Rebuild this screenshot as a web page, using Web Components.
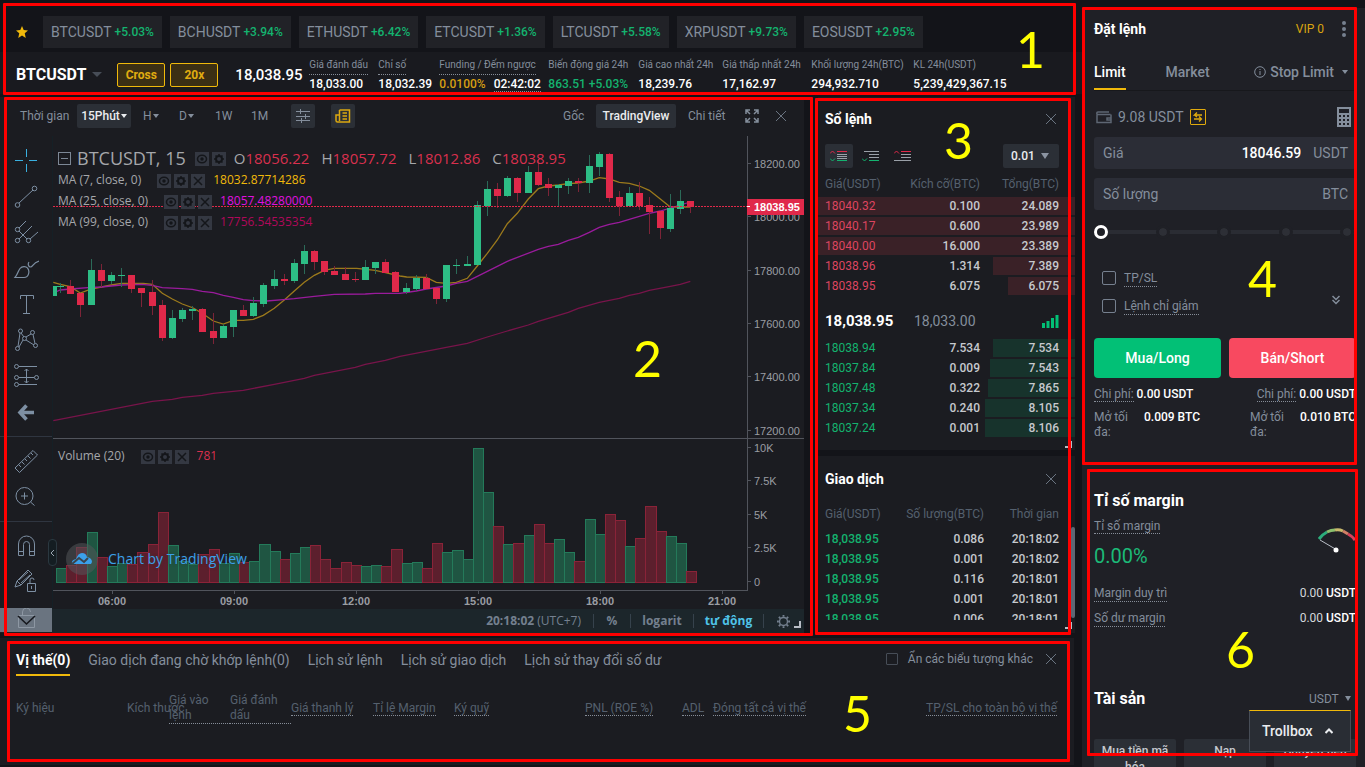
<!DOCTYPE html>
<html lang="vi">
<head>
<meta charset="utf-8">
<meta name="viewport" content="width=device-width, initial-scale=1">
<title>BTCUSDT Futures</title>
<style>
:root{
  --ui:Roboto,"Noto Sans",sans-serif;
  --chart:"Open Sans","Noto Sans",sans-serif;
  --axis:"Liberation Sans",Arial,sans-serif;
  --bg:#131419; --panel:#1b1c21; --side:#1f2026; --field:#2b2d36; --chip:#212227; --btn:#2b2f36;
  --text:#848e9c; --dim:#55606e; --bright:#fff; --num:#c6c9ce; --green:#14b36f; --red:#d9304e; --gold:#f0b90b;
}
html,body{margin:0;height:100%}
body{background:var(--bg);font:12px/16px var(--ui);color:var(--text);overflow:hidden}
</style>
</head>
<body>
<trade-app></trade-app>
<script>
const BASE=`*{box-sizing:border-box}
button,input,select{font:inherit;color:inherit;background:none;border:0;margin:0;padding:0}
button{cursor:pointer}
a{color:inherit;text-decoration:none}
h2{margin:0;color:var(--bright);font-weight:700}
table{border-collapse:collapse;border-spacing:0}
th,td{padding:0;font-weight:400;text-align:left}
svg{display:block;fill:none;stroke:currentColor}
[hidden]{display:none}
.u{border-bottom:1px dotted #868d98}
`;
const define=(name,html,setup)=>customElements.define(name,class extends HTMLElement{
  constructor(){
    super();
    const t=document.createElement('template');
    t.innerHTML=html.replace('<style>','<style>'+BASE);
    this.attachShadow({mode:'open'}).append(t.content.cloneNode(true));
  }
  connectedCallback(){ if(setup) setup(this,this.shadowRoot); }
});

/* numbered outline laid over a page region */
define('callout-frame',`<style>
:host{position:absolute;z-index:20;border:3px solid #f00;border-radius:1px;pointer-events:none}
span{position:absolute;left:var(--nx);top:var(--ny);font:50px/50px Lato,sans-serif;color:#ff0}
</style><span><slot></slot></span>`);

define('close-icon',`<style>:host{display:block;width:12px;color:#6b7582}</style>
<svg width="12" height="12" viewBox="0 0 12 12"><path d="M1 1l10 10M11 1L1 11"/></svg>`);

define('corner-grip',`<style>:host{position:absolute;width:7px;height:7px;border:solid #b9bec6;border-width:0 2px 2px 0}</style>`);

/* ---------- ticker strip ---------- */
define('ticker-chip',`<style>
:host{display:block}
a{display:flex;align-items:center;height:32px;padding:0 8px;gap:3px;background:var(--chip);font-size:14px}
b{font-size:12px;font-weight:500;color:var(--green)}
</style><a href="#"><slot></slot><b><slot name="change"></slot></b></a>`);

define('stat-item',`<style>
:host{display:block;white-space:nowrap;font-size:10px;line-height:14px}
.l{display:inline-block;height:17px}
:host([hint]) .l{border-bottom:1px dotted #868d98}
.v{font-size:12px;line-height:16px;font-weight:500;color:var(--bright);margin-top:1px}
</style><span class="l"><slot name="label"></slot></span><div class="v"><slot></slot></div>`);

define('market-header',`<style>
:host{display:block}
.chips{display:flex;gap:8px;padding:16px 16px 4px;align-items:center}
.star{width:12px;margin-right:7px}
.info{display:flex;align-items:center;height:42px;padding:3px 16px 0;background:#191a1f}
h1{margin:0;font-size:16px;line-height:20px;font-weight:700;color:var(--bright)}
.tri{border:5px solid transparent;border-top-color:#474d57;border-bottom:0;margin:0 15px 0 6px}
.tag{width:48px;height:24px;border:1px solid var(--gold);border-radius:2px;background:#3b2f14;color:#e0ac10;font-weight:700;margin-right:5px}
.price{font-size:15px;font-weight:500;color:var(--bright);margin-left:12px;width:74px}
.stats{display:grid;grid-template-columns:69px 61px 109px 90px 84px 89px 102px 1fr;padding-top:1px}
.y{color:#d69f13;margin-right:8px}.g{color:var(--green)}
</style>
<div class="chips">
<svg class="star" width="12" height="12" viewBox="0 0 14 14"><path fill="#f0b90b" stroke="none" d="M7 0l2 4.800 5 .5-3.800 3.300L11.400 14 7 11.200 2.600 14l1.200-5.400L0 5.300l5-.5z"/></svg>
<ticker-chip>BTCUSDT<span slot="change">+5.03%</span></ticker-chip>
<ticker-chip>BCHUSDT<span slot="change">+3.94%</span></ticker-chip>
<ticker-chip>ETHUSDT<span slot="change">+6.42%</span></ticker-chip>
<ticker-chip>ETCUSDT<span slot="change">+1.36%</span></ticker-chip>
<ticker-chip>LTCUSDT<span slot="change">+5.58%</span></ticker-chip>
<ticker-chip>XRPUSDT<span slot="change">+9.73%</span></ticker-chip>
<ticker-chip>EOSUSDT<span slot="change">+2.95%</span></ticker-chip>
</div>
<div class="info"><h1>BTCUSDT</h1><i class="tri"></i>
<button class="tag">Cross</button><button class="tag">20x</button>
<span class="price">18,038.95</span>
<div class="stats">
<stat-item hint><span slot="label">Giá đánh dấu</span>18,033.00</stat-item>
<stat-item hint><span slot="label">Chỉ số</span>18,032.39</stat-item>
<stat-item hint><span slot="label">Funding / Đếm ngược</span><span class="y">0.0100%</span><span class="u">02:42:02</span></stat-item>
<stat-item><span slot="label">Biến động giá 24h</span><span class="g">863.51 +5.03%</span></stat-item>
<stat-item><span slot="label">Giá cao nhất 24h</span>18,239.76</stat-item>
<stat-item><span slot="label">Giá thấp nhất 24h</span>17,162.97</stat-item>
<stat-item><span slot="label">Khối lượng 24h(BTC)</span>294,932.710</stat-item>
<stat-item><span slot="label">KL 24h(USDT)</span>5,239,429,367.15</stat-item>
</div></div>`);

/* ---------- chart ---------- */
define('chart-toolbar',`<style>
:host{display:flex;align-items:center;height:38px;padding:0 17px 0 20px;font-size:12px}
button{height:24px;border-radius:2px;white-space:nowrap}
.on{background:var(--btn);color:#eaecef;font-weight:500;padding:0 4px}
.sq{width:24px;background:var(--btn);display:grid;place-items:center}
.sp{flex:1}
i{display:inline-block;border:3px solid transparent;border-top:4px solid currentColor;border-bottom:0;margin:0 0 2px 1px}
</style>
<span style="width:57px">Thời gian</span>
<button class="on" style="width:54px;margin-right:12px">15Phút<i></i></button>
<button style="width:36px;text-align:left">H<i></i></button>
<button style="width:36px;text-align:left">D<i></i></button>
<button style="width:36px;text-align:left">1W</button>
<button style="width:40px;text-align:left">1M</button>
<button class="sq" aria-label="Chỉ báo" style="margin-right:16px"><svg width="14" height="14" viewBox="0 0 14 14"><path d="M0 2.500h14M0 7.500h14M0 11.500h14M4.500 0v5M9.500 5v5M5.500 9v5"/></svg></button>
<button class="sq" aria-label="Tin tức" style="color:#dba810"><svg width="16" height="14" viewBox="0 0 16 14"><path d="M4.500 1h10v12H2.500Q1 13 1 11.500V6h3M4.500 1v11M7.500 4h4.500M7.500 7h4.500M7.500 10h4.500" stroke-width="1.500"/></svg></button>
<span class="sp"></span>
<button style="width:33px;text-align:left">Gốc</button>
<button class="on" style="width:80px;margin-right:12px">TradingView</button>
<button style="width:57px;text-align:left">Chi tiết</button>
<button aria-label="Toàn màn hình" style="width:30px"><svg width="14" height="14" viewBox="0 0 14 14" stroke-width="1.500"><path d="M1 5V1h4M1 1l4 4M9 1h4v4M13 1L9 5M1 9v4h4M1 13l4-4M13 9v4H9M13 13L9 9"/></svg></button>
<close-icon></close-icon>`);

define('drawing-tools',`<style>
:host{display:flex;flex-direction:column;width:52px;color:#7d8fa3}
.grp{padding:6px 0;border-bottom:1px solid #2f3540}
.grp:last-of-type{border:0}
button{display:grid;place-items:center;width:52px;height:36px}
.cross{color:#3ab0e0}
.more{height:24px;margin-top:2px;background:#6a7480;color:#16181d}
</style>
<div class="grp">
<button class="cross" aria-label="Con trỏ"><svg width="26" height="26"><path d="M2 13.500h8M16 13.500h8M13.500 2v8M13.500 17v8"/></svg></button>
<button aria-label="Đường xu hướng"><svg width="26" height="26"><circle cx="4.500" cy="22" r="2.300"/><circle cx="21.500" cy="5.500" r="2.300"/><path d="M6 20L20 7"/></svg></button>
<button aria-label="Công cụ Gann"><svg width="26" height="26"><circle cx="4.500" cy="10.500" r="2.200"/><circle cx="4.500" cy="21.500" r="2.200"/><circle cx="15.500" cy="21.500" r="2.200"/><path d="M6 9l7-7M6 20L19 7M17 20l8-7M6 12l8 8"/></svg></button>
<button aria-label="Cọ vẽ"><svg width="26" height="26" stroke-width="1.200"><path d="M2 22.500C5 19 5 16 7 13.500C9 11 13 11 14.500 13C17 16 16 22.500 11 22.500zM16 7c-1.500 2-.5 5 1.500 5c2.500 0 2-4 8.500-6"/></svg></button>
<button aria-label="Văn bản"><svg width="26" height="26"><path d="M7.500 8V4.500h13V8M13.500 4.500v18M10 22.500h7"/></svg></button>
<button aria-label="Mẫu hình"><svg width="26" height="26"><circle cx="7.500" cy="4" r="2"/><circle cx="19.500" cy="5.500" r="2"/><circle cx="11.500" cy="11.500" r="2"/><circle cx="4.500" cy="21.500" r="2"/><circle cx="22.500" cy="18.500" r="2"/><path d="M7 6L5 19.500M8 6l3 4M13 10l5-3M20 7.500l2 9M13 13l8 5M10 13l-4 7"/></svg></button>
<button aria-label="Dự báo"><svg width="26" height="26"><circle cx="3.500" cy="3.500" r="2"/><circle cx="3.500" cy="14.500" r="2"/><circle cx="23.500" cy="14.500" r="2"/><circle cx="3.500" cy="21.500" r="2"/><path d="M6 3.500h18M6 14.500h15M6 21.500h18M13.500 6v14M11.500 8l2-2 2 2M11.500 18l2 2 2-2"/></svg></button>
<button aria-label="Quay lại"><svg width="26" height="26" stroke-width="3.600"><path d="M13.500 6.500L7 13.500l6.500 7M7 13.500h14"/></svg></button>
</div>
<div class="grp">
<button aria-label="Thước đo"><svg width="26" height="26"><path d="M2 20L20 2.500l4.500 4.500L6.500 24.500zM6 17l2 2M9 14l2.500 2.500M12 11l2 2M15 8l2.500 2.500M18 5l2 2"/></svg></button>
<button aria-label="Phóng to"><svg width="26" height="26"><circle cx="11.500" cy="12" r="8.500"/><path d="M8 12h7M11.500 8.500v7M17.500 18l4 3.500"/></svg></button>
</div>
<div class="grp">
<button aria-label="Nam châm"><svg width="26" height="26"><path d="M5.500 22.500V11a8 8 0 0116 0v11.500h-5V11.500a3 3 0 00-6 0v11zM5.500 18.500h5M16.500 18.500h5"/></svg></button>
<button aria-label="Khoá bản vẽ"><svg width="26" height="26"><path d="M2 18l2-6L15 1l4 4L8 16zM4 12l4 4M6 11l9-8M8 14l9-8M14.500 14.500h8v8h-8zM17 14v-3a2 2 0 014 0M18.500 17v3"/></svg></button>
</div>
<button class="more" aria-label="Thêm công cụ"><svg width="26" height="24"><path stroke="#8d97a3" d="M5.500 7.500h16v12h-16zM9.500 7V4a4 4 0 018 0"/><path stroke-width="1.600" d="M5 8l8.500 8L22 8"/></svg></button>`);

define('legend-actions',`<style>
:host{display:flex;gap:3px;padding-top:2px}
button{width:14px;height:14px;background:#343842;color:#14161a}
:host([two]) .x{display:none}
</style>
<button aria-label="Ẩn"><svg width="14" height="14" stroke-width="1.500"><ellipse cx="7" cy="7" rx="4.500" ry="3.800"/><circle cx="7" cy="7" r="1" fill="currentColor"/></svg></button>
<button aria-label="Cài đặt"><svg width="14" height="14"><circle cx="7" cy="7" r="3" stroke-width="2"/><path stroke-width="1.500" d="M7 2v2M7 10v2M2 7h2M10 7h2M3.500 3.500l1.300 1.300M9.200 9.200l1.300 1.300M3.500 10.500l1.300-1.300M9.200 4.800l1.300-1.300"/></svg></button>
<button class="x" aria-label="Xoá"><svg width="14" height="14" stroke-width="1.500"><path d="M3 3l8 8M11 3l-8 8"/></svg></button>`);

/* x, body top, body bottom, high, low, up?, volume top : thirds of a pixel inside the plot */
const BARS=[[160,467,497,467,497,1,387],[181,469,472,460,490,1,400],[211,468,491,450,491,0,390],[241,489,525,489,560,0,336],[274,420,525,387,525,1,291],[304,420,452,402,470,0,366],[334,435,452,426,463,1,393],[364,435,438,414,470,1,383],[394,435,476,435,488,0,387],[424,474,488,474,530,0,351],[457,486,528,450,555,0,327],[487,525,624,510,633,0,231],[517,564,624,540,627,1,330],[547,540,567,534,576,1,378],[577,537,543,528,570,1,387],[607,537,605,535,605,0,357],[640,603,624,549,642,0,342],[670,588,624,582,624,1,384],[700,540,591,540,621,1,354],[730,540,558,525,558,0,381],[760,519,558,501,560,1,378],[790,465,522,459,530,1,327],[823,447,468,420,476,1,348],[853,447,453,432,465,0,372],[883,399,453,387,459,1,354],[913,363,402,345,432,1,336],[943,363,396,360,420,0,330],[973,393,426,393,435,0,372],[1003,423,434,408,434,0,399],[1036,432,450,411,450,0,381],[1066,447,450,426,456,0,390],[1096,411,450,390,450,1,393],[1126,396,414,396,432,1,390],[1156,396,429,387,429,0,393],[1186,426,486,423,486,0,342],
[1219,474,486,459,491,1,384],[1249,444,477,435,482,1,381],[1279,444,476,432,476,0,399],[1309,474,507,474,522,0,324],[1339,405,507,405,516,1,351],[1369,405,408,387,432,1,345],[1402,402,408,378,408,1,372],[1432,225,405,213,405,1,39],[1462,177,228,153,258,1,171],[1492,177,198,159,234,0,273],[1522,144,198,138,201,1,327],[1552,144,189,141,216,0,324],[1585,126,189,108,189,1,300],[1615,126,165,87,168,0,267],[1645,162,174,144,198,0,324],[1675,165,174,162,231,1,312],[1705,153,168,144,192,1,351],[1735,153,158,144,186,0,378],[1768,108,158,75,189,1,252],[1798,72,111,66,138,1,297],[1828,72,204,69,216,0,237],[1858,201,228,183,258,0,255],[1888,189,228,171,228,1,333],[1918,189,228,156,240,0,309],[1948,225,246,201,312,0,213],[1981,243,294,243,327,0,288],[2011,234,297,192,306,1,303],[2041,213,237,180,252,1,324],[2071,213,231,213,249,0,408]];
const MA7='160,457 181,463 211,470 241,489 274,477 304,471 334,465 364,460 430,460 457,463 487,490 517,507 547,522 580,534 610,552 640,573 670,582 700,571 730,571 760,568 790,556 823,535 853,510 883,483 913,457 943,436 973,421 1003,415 1070,415 1126,421 1156,428 1200,438 1220,441 1279,442 1309,457 1339,460 1369,457 1402,445 1432,408 1462,370 1492,330 1522,281 1552,250 1585,207 1615,176 1645,168 1675,165 1705,161 1735,159 1768,153 1798,143 1828,147 1858,157 1888,160 1918,168 1948,181 1981,207 2011,231 2071,231';
const MA25='160,489 181,480 211,477 274,472 304,471 334,468 364,465 424,463 457,466 487,473 547,476 577,478 607,484 640,488 670,496 700,502 730,509 760,512 800,513 850,509 883,506 943,499 1003,493 1096,492 1126,490 1200,490 1249,483 1279,477 1339,468 1369,460 1402,454 1432,439 1522,394 1615,358 1645,349 1675,343 1705,331 1735,322 1768,307 1798,292 1828,283 1858,277 1888,268 1948,250 1981,243 2011,234 2041,225 2071,216';
const MA99='160,872 457,814 517,808 547,802 607,796 640,790 730,781 823,763 913,745 943,736 1066,712 1096,703 1156,691 1200,679 1339,652 1402,640 1462,621 1522,603 1585,585 1615,574 1705,547 1735,535 1798,517 1858,505 1888,496 1918,490 1948,481 2011,469 2041,463 2071,454';

define('price-plot',`<style>
:host{display:flex;position:relative;min-width:0;height:473px}
.plot{flex:1;min-width:0;overflow:hidden}
text{font:11px/12px var(--axis);fill:#9a9da3;stroke:none}
.time text{font-weight:700;text-anchor:middle}
.legend{position:absolute;left:6px;top:11px;font:12px/18px var(--chart);color:#a5a7ab}
.row{display:flex;align-items:center;height:21px;white-space:nowrap}
.row legend-actions{margin:0 8px 0 16px}
.title{font-size:18px;height:22px}
.title legend-actions{margin-left:9px}
.title .box{width:13px;height:13px;border:1px solid #7d8896;margin-right:6px;display:grid;place-items:center}
.title .box::after{content:"";width:7px;height:1px;background:#7d8896}
.ohlc{display:flex;gap:12px;font-size:15px}
.ohlc b{font-weight:400;color:var(--red)}
.ohlc span{white-space:nowrap}
.vol{position:absolute;left:6px;top:309px;font:12px/18px var(--chart);color:#a5a7ab}
.mark{position:absolute;left:14px;top:407px;display:flex;align-items:center;gap:10px;color:#3ba0ea;font:500 14px/20px var(--chart);text-shadow:0 0 3px #333a}
.logo{width:32px;height:32px;border-radius:16px;background:#55565a88;display:grid;place-items:center}
</style>
<svg class="plot" height="473">
<defs><clipPath id="c"><rect x="1" y="0" width="694" height="454"/></clipPath></defs>
<g clip-path="url(#c)"><g id="vol"></g><g id="ma"></g><g id="candles"></g></g>
<path d="M1 70.500H2000" stroke="#e0294a" stroke-dasharray="2 1"/>
<path d="M.5 0V473" stroke="#152026"/>
<path d="M1 302.500H2000M1 454.500H2000" stroke="#51545c"/>
<path d="M60.500 455v3M182.500 455v3M304.500 455v3M426.500 455v3M548.500 455v3M670.500 455v3" stroke="#51545c"/>
<g class="time"><text x="60" y="469">06:00</text><text x="182" y="469">09:00</text><text x="304" y="469">12:00</text><text x="426" y="469">15:00</text><text x="548" y="469">18:00</text><text x="670" y="469">21:00</text></g>
</svg>
<svg class="ax" width="57" height="473">
<path d="M.5 0V455M0 302.500H57" stroke="#51545c"/>
<path d="M1 27.500h3M1 80.500h3M1 134.500h3M1 187.500h3M1 240.500h3M1 294.500h3M1 311.500h3M1 344.500h3M1 378.500h3M1 411.500h3M1 445.500h3" stroke="#51545c"/>
<text x="7" y="32">18200.00</text><text x="7" y="85">18000.00</text><text x="7" y="139">17800.00</text><text x="7" y="192">17600.00</text><text x="7" y="245">17400.00</text><text x="7" y="299">17200.00</text>
<rect x="0" y="63" width="57" height="16" fill="#e0294a" stroke="none"/><path d="M0 70.500h3" stroke="#fff"/>
<text x="7" y="75" style="fill:#fff;font-weight:700">18038.95</text>
<text x="7" y="316">10K</text><text x="7" y="349">7.5K</text><text x="7" y="383">5K</text><text x="7" y="416">2.5K</text><text x="7" y="450">0</text>
</svg>
<div class="legend">
<div class="row title"><span class="box"></span><span>BTCUSDT, 15</span><legend-actions two></legend-actions>
<span class="ohlc"><span>O<b>18056.22</b></span><span>H<b>18057.72</b></span><span>L<b>18012.86</b></span><span>C<b>18038.95</b></span></span></div>
<div class="row">MA (7, close, 0)<legend-actions></legend-actions><span style="color:#f0b90b">18032.87714286</span></div>
<div class="row">MA (25, close, 0)<legend-actions></legend-actions><span style="color:#e010e0">18057.48280000</span></div>
<div class="row">MA (99, close, 0)<legend-actions></legend-actions><span style="color:#b0085a">17756.54535354</span></div>
</div>
<div class="vol row">Volume (20)<legend-actions></legend-actions><span style="color:var(--red)">781</span></div>
<div class="mark"><span class="logo"><svg width="22" height="14" viewBox="0 0 22 14"><path fill="#3ba0ea" stroke="none" d="M1 12q-1-4 4-5Q7 1 11 1q4 0 5 4 5 1 5 5l-1 2z"/><path stroke="#3a444d" stroke-width="2" d="M1 12l7-6 5 4 4-4"/></svg></span><span>Chart by TradingView</span></div>`,
(el,root)=>{
  const NS='http://www.w3.org/2000/svg', r=Math.round;
  const add=(id,tag,a)=>{const n=document.createElementNS(NS,tag);for(const k in a)n.setAttribute(k,a[k]);root.getElementById(id).append(n)};
  BARS.forEach(([x,t,b,h,l,up,v],i)=>{
    const px=r(x/3-52.5), py=q=>r(q/3)-6, c=up?'#2dbd85':'#e0294a', wick=up?'#2b6a58':'#7c2437';
    const next=BARS[i+1]?r(BARS[i+1][0]/3-52.5):px+10, vt=r(v/3)+299;
    const left=i?px-4:-8;
    add('vol','rect',{x:left+.5,y:vt+.5,width:next-px,height:446-vt,fill:up?'#1f5542':'#5c1f2d',stroke:up?'#247a5a':'#8a2338'});
    add('candles','rect',{x:px,y:py(h),width:1,height:py(l)-py(h),fill:wick,stroke:'none'});
    add('candles','rect',{x:px-3,y:py(t),width:7,height:Math.max(1,py(b)-py(t)),fill:c,stroke:'none'});
  });
  [[MA7,'#9c7a1c'],[MA25,'#9a1b9c'],[MA99,'#78144a']].forEach(([p,s])=>add('ma','polyline',{stroke:s,'stroke-width':1.3,
    points:p.split(' ').map(q=>{const[a,b]=q.split(',');return (a/3-52).toFixed(1)+','+(b/3-6).toFixed(1)}).join(' ')}));
});

define('chart-footer',`<style>
:host{display:flex;align-items:center;justify-content:flex-end;height:24px;background:#1c262b;font:12px/16px var(--chart);color:#74808f;padding-right:14px}
span,button{white-space:nowrap}
b{font-weight:700}
button{border-left:1px solid #36424c;height:14px;line-height:14px;font-size:12px;text-align:center;font-weight:700}
</style>
<span style="margin-right:12px"><b>20:18:02</b> (UTC+7)</span>
<button style="width:37px">%</button><button style="width:63px">logarit</button><button style="width:70px;color:#4fc3e8">tự động</button>
<button style="width:27px;display:grid;place-items:center end;" aria-label="Cài đặt"><svg width="13" height="13" viewBox="0 0 14 14"><circle cx="7" cy="7" r="4.300" stroke-width="1.500"/><path stroke-width="2" d="M7 0v2M7 12v2M0 7h2M12 7h2M2 2l1.500 1.500M10.500 10.500L12 12M2 12l1.500-1.500M10.500 3.500L12 2"/></svg></button>`);

define('chart-panel',`<style>
:host{display:flex;flex-direction:column;flex:1;background:var(--panel);position:relative;min-width:0}
.body{display:flex;flex:1;min-height:0;padding-top:1px}
.main{flex:1;min-width:0;display:flex;flex-direction:column}
.tab{position:absolute;left:48px;top:442px;width:9px;height:27px;border:1px solid #2b3840;border-radius:4px;background:#141d22;color:#9aa5b1;display:grid;place-items:center}
corner-grip{right:3px;bottom:5px}
</style>
<chart-toolbar></chart-toolbar>
<div class="body"><drawing-tools></drawing-tools><div class="main"><price-plot></price-plot><chart-footer></chart-footer></div></div>
<button class="tab" aria-label="Thu gọn"><svg width="5" height="8"><path d="M4 1L1 4l3 3"/></svg></button>
<corner-grip></corner-grip>`);

/* ---------- order book and trades ---------- */
define('order-book',`<style>
:host{display:block;position:relative;background:var(--panel);height:353px;padding-top:10px}
.head{display:flex;justify-content:space-between;align-items:center;height:24px;padding:0 18px 0 7px}
h2{font-size:14px;line-height:20px}
.tools{display:flex;align-items:center;padding:0 16px 0 7px;height:26px;margin:12px 0 2px;gap:4px}
.tools button{width:28px;height:24px;display:grid;place-items:center;border-radius:2px}
.tools .on{background:var(--btn)}
.sel{margin-left:auto;position:relative;background:var(--btn);border-radius:2px}
select{appearance:none;width:56px;height:24px;padding-left:8px;color:#eaecef;font-weight:500}
.sel::after{content:"";position:absolute;right:10px;top:9px;border:4px solid transparent;border-top:6px solid #8b94a1;border-bottom:0;pointer-events:none}
table{width:100%;table-layout:fixed}
th{color:var(--dim);height:26px;white-space:nowrap}
td{height:20px;line-height:18px;padding-bottom:2px;color:var(--num);font-weight:500}
th:nth-child(1),td:nth-child(1){padding-left:7px;width:72px}
th:nth-child(2),td:nth-child(2){text-align:right}
th:nth-child(3),td:nth-child(3){text-align:right;padding-right:16px;width:95px}
tr{background:linear-gradient(to left,var(--c) var(--d,0%),transparent var(--d,0%)) no-repeat 0 0/100% 18px}
.ask{--c:#3a2127}.bid{--c:#17332c}
.ask td:first-child{color:#dd4560;font-weight:400}.bid td:first-child{color:var(--green);font-weight:400}
.last{display:flex;align-items:center;height:42px;padding:6px 16px 0 7px;font-size:14px}
.last b{font-size:15px;font-weight:700;color:var(--bright);width:89px}
.last svg{margin-left:auto}
corner-grip{right:3px;bottom:2px}
</style>
<div class="head"><h2>Sổ lệnh</h2><close-icon></close-icon></div>
<div class="tools">
<button class="on" aria-label="Tất cả"><svg width="18" height="12"><path stroke="#9aa0a8" d="M7 4.500h10M7 6.500h10M7 8.500h10"/><path stroke="#e0294a" d="M0 3.500l2.500-2.500 2.500 2.500M7 1.500h10"/><path stroke="#14b36f" d="M0 8.500l2.500 2.500 2.500-2.500M7 10.500h10"/></svg></button>
<button aria-label="Lệnh mua"><svg width="18" height="12"><path stroke="#9aa0a8" d="M2 1.500h15M7 4.500h10M7 7.500h10"/><path stroke="#14b36f" d="M0 8.500l2.500 2.500 2.500-2.500M7 10.500h10"/></svg></button>
<button aria-label="Lệnh bán"><svg width="18" height="12"><path stroke="#9aa0a8" d="M7 4.500h10M7 7.500h10M0 10.500h17"/><path stroke="#e0294a" d="M0 3.500l2.500-2.500 2.500 2.500M7 1.500h10"/></svg></button>
<span class="sel"><select aria-label="Bước giá"><option>0.01</option></select></span></div>
<table><thead><tr><th>Giá(USDT)</th><th>Kích cỡ(BTC)</th><th>Tổng(BTC)</th></tr></thead><tbody class="ask"></tbody></table>
<div class="last"><b>18,038.95</b><span>18,033.00</span><svg width="17" height="13"><path stroke="#02c076" stroke-width="3" d="M1.500 13V8M6 13V6M10.500 13V3M15 13V0"/></svg></div>
<table><tbody class="bid"></tbody></table>
<corner-grip></corner-grip>`,(el,root)=>{
  const fill=(s,rows)=>root.querySelector(s).innerHTML=rows.map(([a,b,c,d])=>`<tr style="--d:${d}%"><td>${a}</td><td>${b}</td><td>${c}</td></tr>`).join('');
  fill('.ask',[['18040.32','0.100','24.089',100],['18040.17','0.600','23.989',100],['18040.00','16.000','23.389',100],['18038.96','1.314','7.389',32],['18038.95','6.075','6.075',26]]);
  fill('.bid',[['18038.94','7.534','7.534',32],['18037.84','0.009','7.543',33],['18037.48','0.322','7.865',34],['18037.34','0.240','8.105',35],['18037.24','0.001','8.106',35]]);
});

define('trade-list',`<style>
:host{display:flex;flex-direction:column;position:relative;background:var(--panel);padding:11px 0 13px;min-height:0}
.head{display:flex;justify-content:space-between;align-items:center;height:24px;padding:0 18px 0 7px}
h2{font-size:14px;line-height:20px}
.scroll{flex:1;min-height:0;overflow:hidden;margin-top:8px}
table{width:100%;table-layout:fixed}
th{color:var(--dim);height:30px;white-space:nowrap}
td{height:20px;color:var(--num);font-weight:500}
th:nth-child(1),td:nth-child(1){padding-left:7px;width:72px}
th:nth-child(2),td:nth-child(2){text-align:right}
th:nth-child(3),td:nth-child(3){text-align:right;padding-right:16px;width:91px}
td:first-child{color:var(--green)}
.bar{position:absolute;right:0;top:71px;bottom:15px;width:4px;background:#5e6673;border-radius:2px}
corner-grip{right:3px;bottom:4px}
</style>
<div class="head"><h2>Giao dịch</h2><close-icon></close-icon></div>
<div class="scroll"><table><thead><tr><th>Giá(USDT)</th><th>Số lượng(BTC)</th><th>Thời gian</th></tr></thead><tbody></tbody></table></div>
<div class="bar"></div><corner-grip></corner-grip>`,(el,root)=>{
  root.querySelector('tbody').innerHTML=[['0.086','02'],['0.001','02'],['0.116','01'],['0.001','01'],['0.006','01']].map(([q,s])=>`<tr><td>18,038.95</td><td>${q}</td><td>20:18:${s}</td></tr>`).join('');
});

/* ---------- positions ---------- */
define('positions-panel',`<style>
:host{display:block;background:var(--panel);height:127px;padding:4px 17px 0 16px}
.tabs{display:flex;gap:18px;height:34px;align-items:stretch;font-size:14px;line-height:36px;white-space:nowrap}
.tabs a.on{color:var(--bright);font-weight:700;border-bottom:2px solid var(--gold)}
label{margin-left:auto;display:flex;align-items:center;gap:10px;font-size:12px}
input{appearance:none;width:12px;height:12px;border:1px solid #474d57;border-radius:1px}
close-icon{align-self:center;margin-left:-6px}
table{width:100%;table-layout:fixed;margin-top:12px;color:var(--dim);line-height:15px}
th{height:40px;vertical-align:middle;white-space:nowrap}
th.w{white-space:normal}
th.w span{display:block;border-bottom:1px dotted #868d98}
th:last-child{text-align:right}
</style>
<nav class="tabs"><a class="on" href="#">Vị thế(0)</a><a href="#">Giao dịch đang chờ khớp lệnh(0)</a><a href="#">Lịch sử lệnh</a><a href="#">Lịch sử giao dịch</a><a href="#">Lịch sử thay đổi số dư</a>
<label><input type="checkbox">Ẩn các biểu tượng khác</label><close-icon></close-icon></nav>
<table><colgroup><col style="width:111px"><col style="width:42px"><col style="width:61px"><col style="width:61px"><col style="width:82px"><col style="width:81px"><col style="width:131px"><col style="width:97px"><col style="width:31px"><col style="width:150px"><col></colgroup>
<thead><tr><th>Ký hiệu</th><th>Kích thước</th><th class="w"><span>Giá vào<br>lệnh</span></th><th class="w"><span>Giá đánh<br>dấu</span></th><th><span class="u">Giá thanh lý</span></th><th><span class="u">Tỉ lệ Margin</span></th><th><span class="u">Ký quỹ</span></th><th><span class="u">PNL (ROE %)</span></th><th><span class="u">ADL</span></th><th><span class="u">Đóng tất cả vị thế</span></th><th><span class="u">TP/SL cho toàn bộ vị thế</span></th></tr></thead></table>`);

/* ---------- order form ---------- */
define('amount-field',`<style>
:host{display:flex;align-items:center;height:32px;background:var(--field);border-radius:3px;padding:0 8px 0 9px;font-size:14px;gap:12px}
label{display:flex;flex:1;min-width:0;align-items:center;white-space:nowrap}
input{flex:1;min-width:0;text-align:right;color:var(--bright);font-weight:500;outline:0}
</style><label><slot></slot><input></label><slot name="unit"></slot>`,(el,root)=>{root.querySelector('input').value=el.getAttribute('value')||''});

define('size-slider',`<style>
:host{display:grid;height:14px;align-items:center}
div,input{grid-area:1/1;width:100%}
div{display:flex;justify-content:space-between;align-items:center;padding:0 3px;background:linear-gradient(#2a2c33,#2a2c33) no-repeat 8px 5px/100% 4px;height:14px}
i{width:8px;height:8px;border-radius:4px;background:#2d2f36;outline:3px solid var(--side)}
input{appearance:none;height:14px}
input::-webkit-slider-thumb{appearance:none;width:14px;height:14px;border:3px solid #fff;border-radius:7px;background:var(--side)}
</style><div><i></i><i></i><i></i><i></i><i></i></div><input type="range" value="0" aria-label="Tỷ lệ số dư">`);

define('order-form',`<style>
:host{display:flex;flex-direction:column;background:var(--side);padding:9px 9px 0 12px;height:458px}
.top,.tabs,.bal{display:flex;align-items:center}
.top{height:24px;justify-content:space-between}
h2{font-size:14px;line-height:20px}
.vip{color:#dba50f;margin-left:auto;margin-right:18px;font-size:12px}
.dots{width:4px;margin-right:10px}
.tabs{margin-top:13px;height:37px;font-size:14px;font-weight:500;border-bottom:1px solid #17181c;padding-right:8px}
.tabs a{line-height:36px;height:36px}
.tabs a.on{color:var(--bright);border-bottom:2px solid var(--gold);margin-right:40px}
.stop{display:flex;align-items:center;gap:4px;margin-left:auto}
.stop i{border:3px solid transparent;border-top:4px solid currentColor;border-bottom:0;margin-left:4px}
.bal{height:24px;margin:14px 5px 8px 2px;font-size:14px;gap:6px}
.wallet{color:#5e6673}
.swap{width:16px;height:16px;border:1px solid #e0aa0d;border-radius:1px;color:#e0aa0d;display:grid;place-items:center}
.calc{margin-left:auto}
amount-field{margin-bottom:9px}
size-slider{margin:6px 2px 0 0}
.opts{display:flex;justify-content:space-between;align-items:center;margin:25px 16px 18px 8px}
.opts label{display:flex;align-items:center;gap:8px;height:28px;line-height:16px}
.opts input{appearance:none;width:14px;height:14px;border:1px solid #76808f;border-radius:2px;margin:0}
.acts{display:grid;grid-template-columns:1fr 1fr;gap:8px}
.acts button{height:40px;border-radius:4px;color:#fff;font-size:14px;font-weight:500}
.buy{background:#02c076}.sell{background:#f84960}
.cost{display:flex;justify-content:space-between;margin-top:8px;color:#fff;line-height:16px;white-space:nowrap}
.cost .u,.max span{color:var(--text)}
.max{display:flex;margin-top:8px;color:#fff;line-height:15px;font-weight:500}
.cost{font-weight:500}.u,.max span{font-weight:400}
.max span{width:50px;padding-right:8px}
.max b{font-weight:500;white-space:nowrap}
</style>
<div class="top"><h2>Đặt lệnh</h2><span class="vip">VIP 0</span><svg class="dots" width="4" height="16"><g fill="#76808f" stroke="none"><circle cx="2" cy="2" r="2"/><circle cx="2" cy="8" r="2"/><circle cx="2" cy="14" r="2"/></g></svg></div>
<nav class="tabs"><a class="on" href="#">Limit</a><a href="#">Market</a><a class="stop" href="#"><svg width="12" height="12"><circle cx="6" cy="6" r="5.300"/><path d="M6 5v4M6 3v1"/></svg>Stop Limit<i></i></a></nav>
<div class="bal"><svg class="wallet" width="16" height="13"><path stroke-width="1.500" d="M14.500 3.500H2a1.200 1.200 0 010-2.500h11M1 2.500v9h14v-8M15 7h-4v2h4"/></svg><span>9.08 USDT</span><button class="swap" aria-label="Chuyển"><svg width="10" height="10" stroke-width="1.300"><path d="M9 3H1.500L4 .5M1.500 3L4 5M1 7h7.500M6 4.500L8.500 7 6 9.500"/></svg></button>
<svg class="calc" width="14" height="20"><g stroke="none"><path fill="#848e9c" d="M0 0h14v20H0z"/><path fill="#1f2026" d="M2 2h10v4H2zM2 8h2v2H2zM6 8h2v2H6zM10 8h2v2h-2zM2 12h2v2H2zM6 12h2v2H6zM10 12h2v2h-2zM2 16h2v2H2zM6 16h2v2H6zM10 16h2v2h-2z"/></g></svg></div>
<amount-field value="18046.59">Giá<span slot="unit">USDT</span></amount-field>
<amount-field>Số lượng<span slot="unit">BTC</span></amount-field>
<size-slider></size-slider>
<div class="opts"><div><label><input type="checkbox"><span class="u">TP/SL</span></label><label><input type="checkbox"><span class="u">Lệnh chỉ giảm</span></label></div>
<svg width="8" height="10" stroke-width="1.500" style="margin-top:16px"><path d="M.5 1L4 4.500 7.500 1M.5 5L4 8.500 7.500 5"/></svg></div>
<div class="acts"><button class="buy">Mua/Long</button><button class="sell">Bán/Short</button></div>
<div class="cost"><span><span class="u">Chi phí:</span> 0.00 USDT</span><span><span class="u">Chi phí:</span> 0.00 USDT</span></div>
<div class="max"><span>Mở tối đa:</span><b>0.009 BTC</b><span style="margin-left:auto">Mở tối đa:</span><b>0.010 BTC</b></div>`);

/* ---------- margin and assets ---------- */
define('margin-panel',`<style>
:host{display:block;background:var(--side);padding:25px 9px 0 12px;flex:1;min-height:0;overflow:hidden}
h2{font-size:16px;line-height:20px}
.ratio{display:flex;justify-content:space-between;align-items:flex-start;height:74px;padding-top:7px}
.big{font-size:20px;line-height:24px;color:#1cba78;margin-top:10px}
.gauge{margin-top:10px}
.r{display:flex;justify-content:space-between;height:25px;line-height:16px;color:#d5d8dc}
.r .u{color:var(--text);height:17px}.r b{font-weight:500;color:#fff}
.assets{display:flex;justify-content:space-between;align-items:center;margin-top:49px;height:30px}
.sel{position:relative}
select{appearance:none;width:42px;color:var(--text)}
.sel::after{content:"";position:absolute;right:0;top:5px;border:3px solid transparent;border-top:5px solid #848e9c;border-bottom:0;pointer-events:none}
.btns{display:grid;grid-template-columns:repeat(3,1fr);gap:8px;margin-top:25px}
.btns button{background:var(--btn);color:#c6c9ce;height:48px;border-radius:2px;padding:4px 4px 0;line-height:16px;font-weight:500;display:flex;justify-content:center}
</style>
<h2>Tỉ số margin</h2>
<div class="ratio"><div><span class="u">Tỉ số margin</span><div class="big">0.00%</div></div>
<svg class="gauge" width="38" height="26" stroke-width="3"><path stroke="#2cae7c" d="M1 11Q5 6 9 4"/><path stroke="#8bbf6d" d="M9 4Q13 2 17 2"/><path stroke="#c9b96c" d="M17 2Q21 1 25 3"/><path stroke="#d07f66" d="M25 3L30 6"/><path stroke="#d9405c" d="M30 6Q34 8 37 12"/><path stroke="#b9bec6" stroke-width="1" d="M2 12l17 10"/><circle cx="18" cy="22" r="2.500" fill="#fff" stroke="none"/></svg></div>
<div class="r"><span class="u">Margin duy trì</span><span>0.00 <b>USDT</b></span></div>
<div class="r"><span class="u">Số dư margin</span><span>0.00 <b>USDT</b></span></div>
<div class="assets"><h2>Tài sản</h2><span class="sel" style="margin-right:5px"><select aria-label="Đơn vị"><option>USDT</option></select></span></div>
<div class="btns"><button>Mua tiền mã hóa</button><button>Nạp</button><button>Chuyển tiền</button></div>`);

define('troll-box',`<style>
:host{display:block;position:absolute;right:14px;bottom:15px;z-index:10}
button{display:flex;align-items:center;justify-content:space-between;width:102px;height:42px;padding:0 17px 0 12px;background:#292d34;border:1px solid #474d57;border-top-color:var(--gold);color:#eaecef;font-size:14px;font-weight:500}
</style><button>Trollbox<svg width="8" height="6" stroke-width="2"><path d="M.5 5L4 1.500 7.500 5"/></svg></button>`);

define('trade-app',`<style>
:host{display:flex;height:100vh;min-height:767px;position:relative}
.left{flex:1;min-width:0;display:flex;flex-direction:column;padding-bottom:2px}
.mid{flex:1;display:flex;gap:14px;margin:3px 7px 5px 0;min-height:0}
.book{width:257px;display:flex;flex-direction:column;gap:6px}
trade-list{flex:1}
.right{width:283px;padding-top:8px;display:flex;flex-direction:column}
.rel,.mid>div{position:relative}
.chartwrap{flex:1;min-width:0;display:flex}
.low{flex:1;min-height:0;display:flex;flex-direction:column}
positions-panel{margin-right:8px}
</style>
<div class="left">
<div class="rel"><market-header></market-header><callout-frame style="inset:3px 6px -1px 3px;--nx:1010px;--ny:18px">1</callout-frame></div>
<div class="mid"><div class="chartwrap"><chart-panel></chart-panel><callout-frame style="inset:0 -9px -3px 4px;--nx:626px;--ny:233px">2</callout-frame></div>
<div class="book"><order-book></order-book><trade-list></trade-list><callout-frame style="inset:1px 4px -2px -3px;--nx:126px;--ny:14px">3</callout-frame></div></div>
<div class="rel"><positions-panel></positions-panel><callout-frame style="inset:3px 12px 3px 7px;--nx:833px;--ny:44px">5</callout-frame></div>
</div>
<div class="right">
<div class="rel"><order-form></order-form><callout-frame style="inset:-1px 8px 1px 0;--nx:163px;--ny:243px">4</callout-frame></div>
<div class="rel low"><margin-panel></margin-panel><callout-frame style="inset:3px 7px 11px 5px;--nx:136px;--ny:152px">6</callout-frame></div>
</div>
<troll-box></troll-box>`);
</script>
</body>
</html>
